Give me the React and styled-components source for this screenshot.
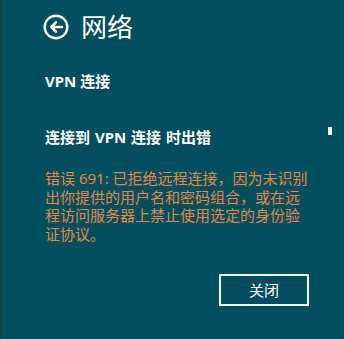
import styled, { createGlobalStyle } from "styled-components";

const GlobalStyle = createGlobalStyle`
  html, body {
    margin: 0;
    padding: 0;
    background: #004e5e;
  }
  body {
    font-family: "Noto Sans", "Noto Sans CJK SC", sans-serif;
  }
`;

export default function App() {
  return (
    <>
      <GlobalStyle />
      <StyledPage>
        <StyledHeader>
          <StyledBackButton aria-label="返回">
            <svg viewBox="0 0 26 26" width="26" height="26">
              <circle cx="13" cy="13" r="11.3" fill="none" stroke="white" strokeWidth="2.4" />
              <path
                d="M19 13H8.5M13 8.3L8.3 13l4.7 4.7"
                fill="none"
                stroke="white"
                strokeWidth="2.6"
                strokeLinecap="round"
                strokeLinejoin="round"
              />
            </svg>
          </StyledBackButton>
          <StyledTitle>网络</StyledTitle>
        </StyledHeader>

        <StyledSubTitle>VPN 连接</StyledSubTitle>
        <StyledErrorTitle>连接到 VPN 连接 时出错</StyledErrorTitle>
        <StyledMessage>
          {"错误 691: 已拒绝远程连接，因为未识别\n出你提供的用户名和密码组合，或在远\n程访问服务器上禁止使用选定的身份验\n证协议。"}
        </StyledMessage>

        <StyledActions>
          <StyledButton>关闭</StyledButton>
        </StyledActions>

        <StyledScrollMark />
      </StyledPage>
    </>
  );
}

const StyledPage = styled.div`
  position: relative;
  box-sizing: border-box;
  width: 344px;
  height: 339px;
  padding: 12px 0 0 43px;
  background: #004e5e;
  border-left: 2px solid #163f47;
  overflow: hidden;
`;

const StyledHeader = styled.div`
  display: flex;
  align-items: center;
  gap: 12px;
  margin-left: -2px;
  height: 30px;
`;

const StyledBackButton = styled.button`
  display: flex;
  align-items: center;
  justify-content: center;
  width: 26px;
  height: 26px;
  padding: 0;
  border: none;
  background: none;
  cursor: pointer;
`;

const StyledTitle = styled.h1`
  margin: 0;
  font-size: 26px;
  line-height: 30px;
  font-weight: 400;
  color: #ffffff;
`;

const StyledSubTitle = styled.h2`
  margin: 29px 0 0;
  font-size: 15px;
  line-height: 20px;
  font-weight: 700;
  color: #ffffff;
`;

const StyledErrorTitle = styled.h3`
  margin: 36px 0 0;
  font-size: 15px;
  line-height: 20px;
  font-weight: 700;
  word-spacing: 1px;
  color: #ffffff;
`;

const StyledMessage = styled.p`
  margin: 22px 0 0;
  font-size: 15px;
  line-height: 18.7px;
  color: #e38a45;
  white-space: pre-line;
`;

const StyledActions = styled.div`
  display: flex;
  justify-content: flex-end;
  padding-right: 35px;
  margin-top: 30px;
`;

const StyledButton = styled.button`
  box-sizing: border-box;
  width: 90px;
  height: 32px;
  border: 2px solid #f2f7f7;
  background: transparent;
  color: #ffffff;
  font-family: "Noto Sans CJK SC", sans-serif;
  font-size: 15px;
  cursor: pointer;
`;

const StyledScrollMark = styled.div`
  position: absolute;
  top: 127px;
  left: 326px;
  width: 4px;
  height: 8px;
  background: #ffffff;
`;
